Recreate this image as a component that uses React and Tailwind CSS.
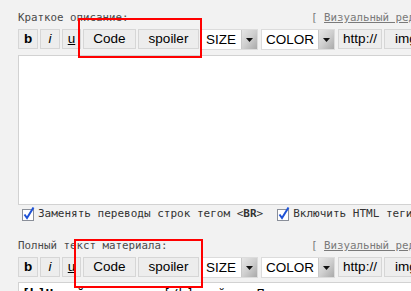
import React from "react";

const mono = { fontFamily: '"DejaVu Sans Mono", monospace' };

function Btn({ w, children, className = "" }) {
  return (
    <div
      className={`h-[20px] flex items-center justify-center border border-[#d6d6d6] bg-[#ededed] text-[13.5px] text-black leading-none shrink-0 ${className}`}
      style={{ width: w, fontFamily: '"Liberation Sans", Arial, sans-serif' }}
    >
      {children}
    </div>
  );
}

function Sel({ w, label }) {
  return (
    <div
      className="h-[21px] flex border border-[#dcdcdc] bg-white shrink-0"
      style={{ width: w, fontFamily: '"Liberation Sans", Arial, sans-serif' }}
    >
      <div className="flex-1 flex items-center pl-[4px] text-[13.5px] text-black leading-none">{label}</div>
      <div className="w-[16px] flex items-center justify-center bg-gradient-to-br from-[#e6e6e6] via-[#cfcfcf] to-[#a9a9a9] border-l border-[#c8c8c8]">
        <svg width="7" height="4" viewBox="0 0 7 4">
          <path d="M0 0H7L3.5 4Z" fill="#111" />
        </svg>
      </div>
    </div>
  );
}

function Toolbar() {
  return (
    <div className="flex items-start">
      <Btn w={20} className="font-bold">b</Btn>
      <Btn w={20} className="ml-[2px] italic">i</Btn>
      <Btn w={19} className="ml-[2px] underline">u</Btn>
      <Btn w={53} className="ml-[2px]">Code</Btn>
      <Btn w={61} className="ml-[2px]">spoiler</Btn>
      <div className="ml-[2px]"><Sel w={57} label="SIZE" /></div>
      <div className="ml-[3px]"><Sel w={74} label="COLOR" /></div>
      <Btn w={44} className="ml-[3px]">http://</Btn>
      <Btn w={44} className="ml-[2px]">img</Btn>
      <Btn w={44} className="ml-[2px]">quote</Btn>
    </div>
  );
}

function Header({ label }) {
  return (
    <div className="flex h-[13px] items-center leading-[13px]" style={mono}>
      <div className="w-[293px] text-[10.8px] text-[#4a4a4a] whitespace-nowrap">{label}</div>
      <div className="text-[10.8px] text-[#7a7a7a] whitespace-nowrap">
        [ <span className="underline">Визуальный редактор</span> ]
      </div>
    </div>
  );
}

function Check() {
  return (
    <svg width="14" height="15" viewBox="0 0 14 15" className="shrink-0">
      <rect x="0.5" y="2.5" width="11" height="11" fill="#fff" stroke="#8a8f99" />
      <path d="M2.5 7.5 L5 11 L11.5 0.5" fill="none" stroke="#1f52d6" strokeWidth="2" />
    </svg>
  );
}

export default function App() {
  return (
    <div className="relative w-[411px] h-[291px] overflow-hidden bg-[#f2f2f2]">
      <div className="w-[620px] pl-[18px] pt-[11px]">
        <Header label="Краткое описание:" />
        <div className="mt-[5px]">
          <Toolbar />
        </div>
        <div className="mt-[5px] h-[150px] w-[560px] bg-white border border-[#d2d2d2]" />
        <div className="mt-[2px] flex items-center h-[15px] text-[11px] text-[#333] whitespace-nowrap" style={mono}>
          <div className="ml-[4px]"><Check /></div>
          <span className="ml-[2px]">Заменять переводы строк тегом &lt;<b>BR</b>&gt;</span>
          <div className="ml-[14px]"><Check /></div>
          <span className="ml-[2px]">Включить HTML теги</span>
        </div>
        <div className="mt-[17px]">
          <Header label="Полный текст материала:" />
        </div>
        <div className="mt-[5px]">
          <Toolbar />
        </div>
        <div className="mt-[4px] h-[150px] w-[560px] bg-white border border-[#d2d2d2] px-[3px] pt-[1px] text-[13px] text-black whitespace-nowrap" style={mono}>
          <b>[b]Новый</b> материал [/b] сайта «Портал» ...
        </div>
      </div>
      <div className="absolute left-[78px] top-[18px] w-[124px] h-[40px] border-2 border-[#ff0000]" />
      <div className="absolute left-[74px] top-[239px] w-[129px] h-[49px] border-2 border-[#ff0000]" />
    </div>
  );
}
